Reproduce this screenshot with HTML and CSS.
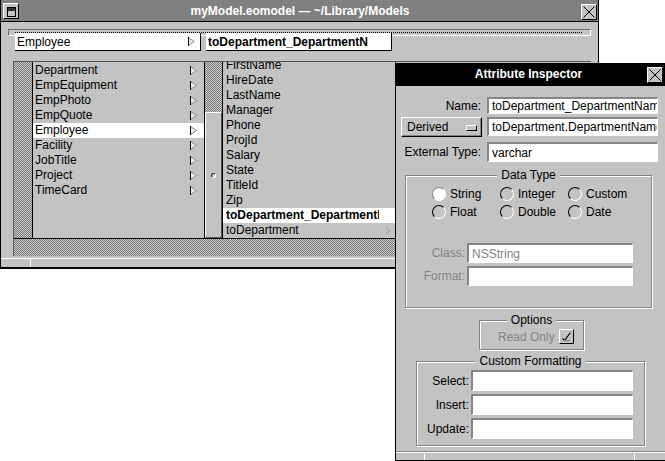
FILE: index.html
```html
<!DOCTYPE html>
<html>
<head>
<meta charset="utf-8">
<title>myModel.eomodel</title>
<link rel="stylesheet" href="styles.css">
</head>
<body>
<div class="win main">
  <div class="tbar">
    <span class="mini"><svg width="14" height="14" viewBox="0 0 14 14"><rect x="3.5" y="3.5" width="8" height="9" fill="#c3c3c3" stroke="#000"/><rect x="4" y="4" width="7" height="3" fill="#333"/></svg></span>
    <span class="ttl">myModel.eomodel — ~/Library/Models</span>
    <span class="cbtn"><svg width="14" height="14" viewBox="0 0 14 14"><path d="M1.5 1.5L12.5 12.5M12.5 1.5L1.5 12.5" stroke="#000" stroke-width="1"/></svg></span>
  </div>
  <div class="mbody">
    <div class="pathbar"><div class="dots"></div></div>
    <div class="cells">
      <div class="cell"><span class="nm">Employee</span><svg class="arr" width="7" height="9" viewBox="0 0 7 9"><path d="M0.5 0.5L6.5 4.5L0.5 8.5Z" fill="#e8e8e8" stroke="#8a8a8a"/><path d="M0.5 0V9" stroke="#000"/></svg></div>
      <div class="cell bold"><span class="nm">toDepartment_DepartmentN</span></div>
    </div>
    <div class="browser">
      <div class="cols">
        <div class="vs"></div>
        <div class="list l1">
          <div class="row"><span class="nm">Department</span><svg class="arr" width="7" height="9" viewBox="0 0 7 9"><path d="M0.5 0.5L6.5 4.5L0.5 8.5Z" fill="#e8e8e8" stroke="#8a8a8a"/><path d="M0.5 0V9" stroke="#000"/></svg></div>
          <div class="row"><span class="nm">EmpEquipment</span><svg class="arr" width="7" height="9" viewBox="0 0 7 9"><path d="M0.5 0.5L6.5 4.5L0.5 8.5Z" fill="#e8e8e8" stroke="#8a8a8a"/><path d="M0.5 0V9" stroke="#000"/></svg></div>
          <div class="row"><span class="nm">EmpPhoto</span><svg class="arr" width="7" height="9" viewBox="0 0 7 9"><path d="M0.5 0.5L6.5 4.5L0.5 8.5Z" fill="#e8e8e8" stroke="#8a8a8a"/><path d="M0.5 0V9" stroke="#000"/></svg></div>
          <div class="row"><span class="nm">EmpQuote</span><svg class="arr" width="7" height="9" viewBox="0 0 7 9"><path d="M0.5 0.5L6.5 4.5L0.5 8.5Z" fill="#e8e8e8" stroke="#8a8a8a"/><path d="M0.5 0V9" stroke="#000"/></svg></div>
          <div class="row sel"><span class="nm">Employee</span><svg class="arr" width="7" height="9" viewBox="0 0 7 9"><path d="M0.5 0.5L6.5 4.5L0.5 8.5Z" fill="#e8e8e8" stroke="#8a8a8a"/><path d="M0.5 0V9" stroke="#000"/></svg></div>
          <div class="row"><span class="nm">Facility</span><svg class="arr" width="7" height="9" viewBox="0 0 7 9"><path d="M0.5 0.5L6.5 4.5L0.5 8.5Z" fill="#e8e8e8" stroke="#8a8a8a"/><path d="M0.5 0V9" stroke="#000"/></svg></div>
          <div class="row"><span class="nm">JobTitle</span><svg class="arr" width="7" height="9" viewBox="0 0 7 9"><path d="M0.5 0.5L6.5 4.5L0.5 8.5Z" fill="#e8e8e8" stroke="#8a8a8a"/><path d="M0.5 0V9" stroke="#000"/></svg></div>
          <div class="row"><span class="nm">Project</span><svg class="arr" width="7" height="9" viewBox="0 0 7 9"><path d="M0.5 0.5L6.5 4.5L0.5 8.5Z" fill="#e8e8e8" stroke="#8a8a8a"/><path d="M0.5 0V9" stroke="#000"/></svg></div>
          <div class="row"><span class="nm">TimeCard</span><svg class="arr" width="7" height="9" viewBox="0 0 7 9"><path d="M0.5 0.5L6.5 4.5L0.5 8.5Z" fill="#e8e8e8" stroke="#8a8a8a"/><path d="M0.5 0V9" stroke="#000"/></svg></div>
        </div>
        <div class="vs vs2"><div class="knob"><span class="dimple"></span></div></div>
        <div class="list l2">
          <div class="rows">
            <div class="row"><span class="nm">FirstName</span><span class="aslot"></span></div>
            <div class="row"><span class="nm">HireDate</span><span class="aslot"></span></div>
            <div class="row"><span class="nm">LastName</span><span class="aslot"></span></div>
            <div class="row"><span class="nm">Manager</span><span class="aslot"></span></div>
            <div class="row"><span class="nm">Phone</span><span class="aslot"></span></div>
            <div class="row"><span class="nm">ProjId</span><span class="aslot"></span></div>
            <div class="row"><span class="nm">Salary</span><span class="aslot"></span></div>
            <div class="row"><span class="nm">State</span><span class="aslot"></span></div>
            <div class="row"><span class="nm">TitleId</span><span class="aslot"></span></div>
            <div class="row"><span class="nm">Zip</span><span class="aslot"></span></div>
            <div class="row sel bold"><span class="nm">toDepartment_DepartmentName</span><span class="aslot"></span></div>
            <div class="row"><span class="nm">toDepartment</span><span class="aslot"><svg width="6" height="8" viewBox="0 0 6 8"><path d="M1 1L5 4L1 7" fill="none" stroke="#9a9a9a"/></svg></span></div>
          </div>
        </div>
        <div class="col3"></div>
      </div>
      <div class="hs"></div>
    </div>
    <div class="rbar"><span class="rdiv"></span></div>
  </div>
</div>

<div class="win insp">
  <div class="itbar">
    <span class="ittl">Attribute Inspector</span>
    <span class="cbtn"><svg width="14" height="14" viewBox="0 0 14 14"><path d="M1.5 1.5L12.5 12.5M12.5 1.5L1.5 12.5" stroke="#000" stroke-width="1"/></svg></span>
  </div>
  <div class="ibody">
    <div class="frow r1">
      <span class="lab">Name:</span>
      <span class="fld h17">toDepartment_DepartmentName</span>
    </div>
    <div class="frow r2">
      <span class="popbtn">Derived<span class="popind"></span></span>
      <span class="fld h19">toDepartment.DepartmentName</span>
    </div>
    <div class="frow r3">
      <span class="lab">External Type:</span>
      <span class="fld h20">varchar</span>
    </div>

    <div class="box dtype">
      <span class="btitle">Data Type</span>
      <div class="radios">
        <span class="radio"><span class="rc on"></span>String</span>
        <span class="radio"><span class="rc"></span>Integer</span>
        <span class="radio"><span class="rc"></span>Custom</span>
        <span class="radio"><span class="rc"></span>Float</span>
        <span class="radio"><span class="rc"></span>Double</span>
        <span class="radio"><span class="rc"></span>Date</span>
      </div>
      <div class="drow first"><span class="dlab">Class:</span><span class="fld dfld">NSString</span></div>
      <div class="drow"><span class="dlab">Format:</span><span class="fld dfld"></span></div>
    </div>

    <div class="box opts">
      <span class="btitle">Options</span>
      <div class="orow"><span class="dis">Read Only</span><span class="chk"><svg width="13" height="13" viewBox="0 0 13 13"><path d="M2.5 8.5L4.5 10.5L10.5 2.5" fill="none" stroke="#000" stroke-width="1.2"/><path d="M3 10.5H10" stroke="#808080"/></svg></span></div>
    </div>

    <div class="box cfmt">
      <span class="btitle">Custom Formatting</span>
      <div class="crow first"><span class="clab">Select:</span><span class="fld cfld"></span></div>
      <div class="crow"><span class="clab">Insert:</span><span class="fld cfld"></span></div>
      <div class="crow"><span class="clab">Update:</span><span class="fld cfld"></span></div>
    </div>
  </div>
  <div class="ibar"><span class="d1"></span><span class="d2"></span></div>
</div>
</body>
</html>
```
FILE: styles.css
```css
html, body {
  margin: 0;
  padding: 0;
  overflow: hidden;
}
body {
  width: 665px;
  height: 461px;
  background: #fff;
  position: relative;
  font-family: "Liberation Sans", Arial, Helvetica, sans-serif;
  font-size: 12px;
  color: #000;
}
.win {
  position: absolute;
  box-sizing: border-box;
  background: #c3c3c3;
  display: flex;
  flex-direction: column;
}
.bold { font-weight: bold; }

/* main window */
.main {
  left: 0;
  top: 0;
  width: 599px;
  height: 269px;
  border: 1px solid #000;
  border-top: none;
}
.tbar {
  flex: none;
  height: 21px;
  background: #808080;
  border-bottom: 1px solid #000;
  display: flex;
  align-items: flex-start;
}
.mini {
  box-sizing: border-box;
  width: 16px;
  height: 16px;
  margin: 3px 0 0 2px;
  background: #c3c3c3;
  border: 1px solid;
  border-color: #fff #000 #000 #fff;
  display: flex;
}
.ttl {
  flex: 1;
  text-align: center;
  color: #fff;
  font-weight: bold;
  line-height: 22px;
  white-space: nowrap;
}
.cbtn {
  box-sizing: border-box;
  width: 16px;
  height: 16px;
  margin: 4px 1px 0 0;
  background: #c3c3c3;
  border: 1px solid;
  border-color: #fff #000 #000 #fff;
  display: flex;
}
.mbody {
  flex: 1;
  display: flex;
  flex-direction: column;
}
.pathbar {
  box-sizing: border-box;
  margin: 7px 0 0 7px;
  width: 583px;
  height: 7px;
  border-top: 1px solid #6e6e6e;
  border-left: 1px solid #6e6e6e;
  border-right: 1px solid #fff;
  border-bottom: 1px solid #fff;
}
.dots {
  margin: 2px 7px 0 6px;
  height: 1px;
  background: repeating-linear-gradient(90deg, #000 0 1px, transparent 1px 2px);
}
.cells {
  display: flex;
  gap: 5px;
  margin: -3px 0 0 14px;
}
.cell {
  box-sizing: border-box;
  width: 186px;
  height: 18px;
  background: #fff;
  border-right: 1px solid #000;
  border-bottom: 1px solid #000;
  display: flex;
  align-items: center;
  padding: 0 5px 0 2px;
  white-space: nowrap;
  overflow: hidden;
}
.nm {
  flex: 1;
  overflow: hidden;
  white-space: nowrap;
}
.arr { flex: none; display: block; }

.browser {
  box-sizing: border-box;
  margin: 10px 0 0 12px;
  width: 578px;
  border-top: 1px solid #555;
  border-left: 1px solid #555;
}
.cols {
  display: flex;
  height: 177px;
  box-sizing: border-box;
  border-bottom: 1px solid #000;
}
.vs, .hs {
  background: repeating-conic-gradient(#7c7c7c 0% 25%, #c8c8c8 0% 50%) 0 0 / 2px 2px;
}
.vs {
  flex: none;
  width: 18px;
  border-right: 1px solid #000;
}
.vs2 {
  width: 17px;
  display: flex;
  flex-direction: column;
}
.knob {
  box-sizing: border-box;
  margin-top: 50px;
  flex: 1;
  background: #c3c3c3;
  border: 1px solid;
  border-color: #fff #555 #555 #fff;
  display: flex;
  align-items: center;
  justify-content: center;
}
.dimple {
  box-sizing: border-box;
  width: 5px;
  height: 5px;
  border-radius: 50%;
  border: 1px solid;
  border-color: #333 #fff #fff #333;
}
.list {
  flex: none;
  overflow: hidden;
  background: #c3c3c3;
  border-right: 1px solid #000;
}
.l1 {
  width: 171px;
  padding-top: 1px;
}
.l2 { width: 172px; }
.l2 .rows { margin-top: -4px; }
.row {
  height: 15px;
  line-height: 15px;
  display: flex;
  align-items: center;
  white-space: nowrap;
}
.l1 .row { padding: 0 7px 0 2px; }
.l2 .row { padding: 0 4px 0 3px; }
.row.sel { background: #fff; }
.aslot {
  flex: none;
  width: 12px;
  display: flex;
  justify-content: flex-end;
}
.col3 { flex: 1; }
.hs { height: 17px; }
.rbar {
  margin-top: auto;
  box-sizing: border-box;
  height: 10px;
  border-top: 1px solid #fff;
  border-bottom: 1px solid #000;
  display: flex;
}
.rdiv {
  margin-left: 29px;
  width: 1px;
  background: #fff;
}

/* inspector */
.insp {
  left: 395px;
  top: 63px;
  width: 275px;
  height: 398px;
  border-left: 1px solid #000;
  border-bottom: 1px solid #000;
}
.itbar {
  flex: none;
  height: 23px;
  background: #000;
  display: flex;
  align-items: flex-start;
}
.ittl {
  box-sizing: border-box;
  width: 251px;
  padding-left: 14px;
  text-align: center;
  color: #fff;
  font-weight: bold;
  line-height: 23px;
  white-space: nowrap;
}
.itbar .cbtn { margin: 4px 0 0 0; }
.ibody {
  flex: 1;
  display: flex;
  flex-direction: column;
  padding: 11px 0 0 5px;
}
.frow {
  display: flex;
  align-items: center;
  justify-content: space-between;
  width: 257px;
}
.r2 { margin-top: 3px; align-items: flex-start; }
.r3 { margin-top: 5px; }
.lab {
  width: 80px;
  text-align: right;
  white-space: nowrap;
}
.fld {
  box-sizing: border-box;
  background: #fff;
  border-top: 2px solid #858585;
  border-left: 2px solid #858585;
  border-right: 1px solid #fff;
  border-bottom: 1px solid #fff;
  padding-left: 3px;
  overflow: hidden;
  white-space: nowrap;
  display: flex;
  align-items: center;
}
.frow .fld { width: 171px; }
.h17 { height: 17px; }
.h19 { height: 19px; }
.h20 { height: 20px; }
.popbtn {
  box-sizing: border-box;
  width: 81px;
  height: 20px;
  border: 1px solid;
  border-color: #fff #000 #000 #fff;
  box-shadow: inset -1px -1px 0 #858585;
  display: flex;
  align-items: center;
  justify-content: space-between;
  padding: 0 4px 0 5px;
}
.popind {
  box-sizing: border-box;
  width: 11px;
  height: 6px;
  border: 1px solid;
  border-color: #fff #000 #000 #fff;
  margin-top: 1px;
}

.box {
  box-sizing: border-box;
  border: 1px solid #858585;
  box-shadow: inset 1px 1px 0 #fff, 1px 1px 0 #fff;
  display: flex;
  flex-direction: column;
  align-items: center;
}
.btitle {
  line-height: 14px;
  margin-top: -8px;
  padding: 0 4px;
  background: #c3c3c3;
  white-space: nowrap;
}
.dtype {
  margin: 13px 0 0 4px;
  width: 247px;
  height: 133px;
}
.radios {
  align-self: flex-start;
  margin: 5px 0 0 26px;
  display: grid;
  grid-template-columns: repeat(3, 68px);
  row-gap: 4px;
}
.radio {
  display: flex;
  align-items: center;
  gap: 4px;
  height: 14px;
}
.rc {
  box-sizing: border-box;
  width: 14px;
  height: 14px;
  border-radius: 50%;
  border: 1px solid;
  border-color: #000 #fff #fff #000;
  background: #c3c3c3;
}
.rc.on {
  background: #fff;
  border-color: #858585 #fff #fff #858585;
}
.drow {
  align-self: flex-start;
  display: flex;
  align-items: center;
  margin-top: 3px;
}
.drow.first { margin-top: 24px; }
.dlab {
  width: 59px;
  text-align: right;
  color: #858585;
}
.dfld {
  margin-left: 2px;
  width: 166px;
  height: 20px;
  color: #858585;
}
.opts {
  margin: 12px 0 0 78px;
  width: 105px;
  height: 30px;
}
.orow {
  align-self: flex-start;
  margin: 2px 0 0 18px;
  display: flex;
  align-items: center;
  gap: 4px;
}
.dis { color: #858585; }
.chk {
  box-sizing: border-box;
  width: 15px;
  height: 15px;
  border: 1px solid;
  border-color: #fff #000 #000 #fff;
  background: #c3c3c3;
  display: flex;
}
.cfmt {
  margin: 11px 0 0 15px;
  width: 229px;
  height: 85px;
}
.crow {
  align-self: flex-start;
  display: flex;
  align-items: center;
  margin-top: 3px;
}
.crow.first { margin-top: 2px; }
.clab {
  width: 52px;
  text-align: right;
}
.cfld {
  margin-left: 2px;
  width: 162px;
  height: 21px;
}
.ibar {
  flex: none;
  box-sizing: border-box;
  height: 9px;
  border-top: 1px solid #858585;
  box-shadow: inset 0 1px 0 #fff;
  display: flex;
}
.d1 {
  margin-left: 28px;
  width: 1px;
  background: #fff;
}
.d2 {
  margin-left: 209px;
  width: 1px;
  background: #fff;
}
```
